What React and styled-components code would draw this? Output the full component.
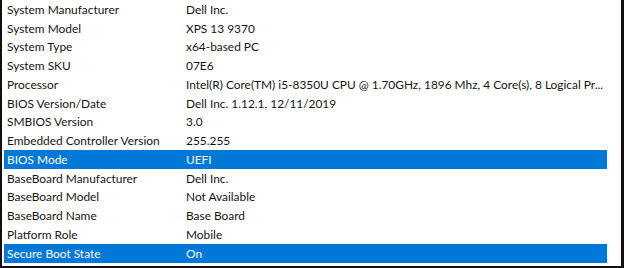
import React from "react";
import styled, { createGlobalStyle } from "styled-components";

const Global = createGlobalStyle`
  html, body { margin: 0; padding: 0; background: #fff; }
  body { font-family: Lato, "Noto Sans", sans-serif; }
`;

const Frame = styled.div`
  box-sizing: border-box;
  width: 624px;
  height: 268px;
  border-left: 2px solid #111;
  border-right: 3px solid #111;
  border-bottom: 2px solid #111;
  background: #fff;
  padding: 0 14px 0 2px;
  overflow: hidden;
`;

const List = styled.div`
  display: flex;
  flex-direction: column;
`;

const Row = styled.div`
  display: grid;
  grid-template-columns: 179px minmax(0, 1fr);
  height: 18.75px;
  align-items: center;
  font-size: 11.9px;
  color: ${(p) => (p.$selected ? "#fff" : "#151515")};
  background: ${(p) => (p.$selected ? "#0078d7" : "transparent")};
  white-space: nowrap;
`;

const Cell = styled.div`
  padding-left: 3px;
  overflow: hidden;
`;

const rows = [
  ["System Manufacturer", "Dell Inc."],
  ["System Model", "XPS 13 9370"],
  ["System Type", "x64-based PC"],
  ["System SKU", "07E6"],
  ["Processor", "Intel(R) Core(TM) i5-8350U CPU @ 1.70GHz, 1896 Mhz, 4 Core(s), 8 Logical Pr..."],
  ["BIOS Version/Date", "Dell Inc. 1.12.1, 12/11/2019"],
  ["SMBIOS Version", "3.0"],
  ["Embedded Controller Version", "255.255"],
  ["BIOS Mode", "UEFI", true],
  ["BaseBoard Manufacturer", "Dell Inc."],
  ["BaseBoard Model", "Not Available"],
  ["BaseBoard Name", "Base Board"],
  ["Platform Role", "Mobile"],
  ["Secure Boot State", "On", true],
];

export default function App() {
  return (
    <>
      <Global />
      <Frame>
        <List>
          {rows.map(([k, v, sel]) => (
            <Row key={k} $selected={sel}>
              <Cell>{k}</Cell>
              <Cell>{v}</Cell>
            </Row>
          ))}
        </List>
      </Frame>
    </>
  );
}
